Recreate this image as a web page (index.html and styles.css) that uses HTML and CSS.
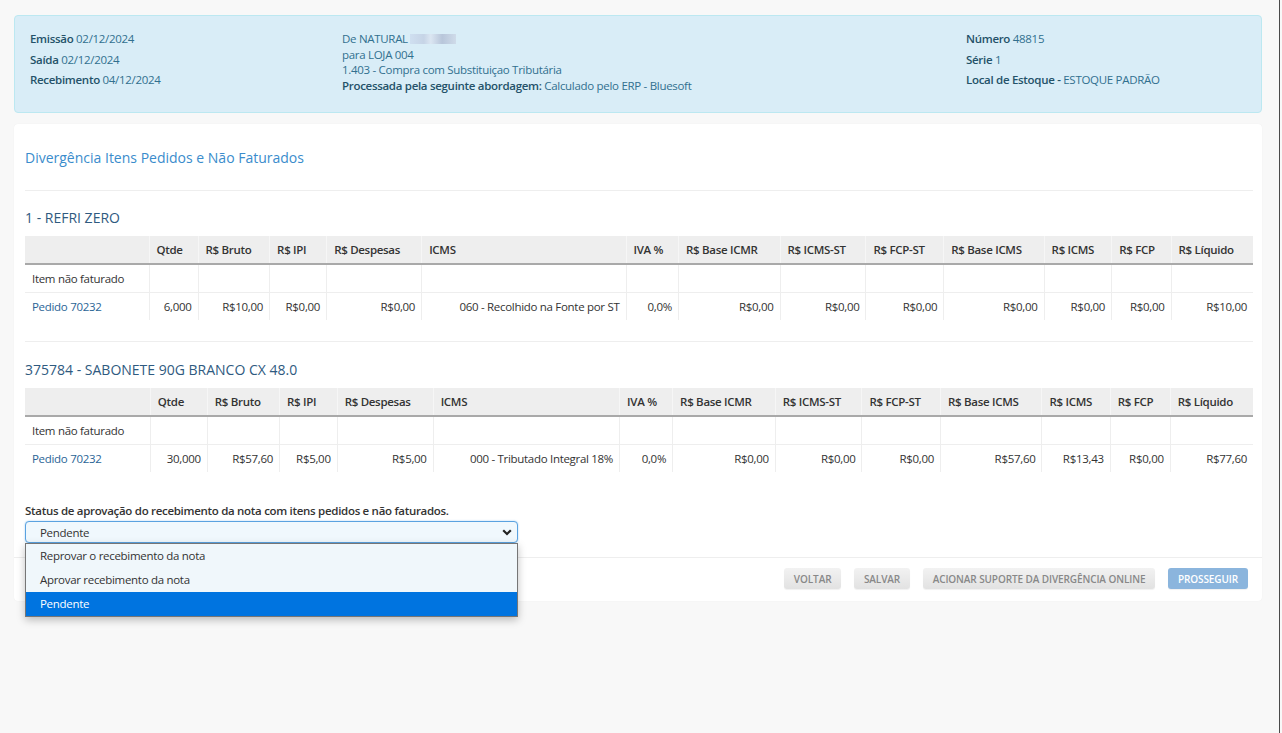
FILE: index.html
```html
<!DOCTYPE html>
<html lang="pt-BR">
<head>
    <meta charset="UTF-8">
    <title>Divergência Itens Pedidos e Não Faturados</title>
    <link rel="stylesheet" href="styles.css">
</head>
<body>
    <div class="page">
        <div class="info-panel">
            <div class="info-col info-left">
                <div class="info-line"><b>Emissão</b> 02/12/2024</div>
                <div class="info-line"><b>Saída</b> 02/12/2024</div>
                <div class="info-line"><b>Recebimento</b> 04/12/2024</div>
            </div>
            <div class="info-col info-mid">
                <div class="mid-line">De NATURAL<span class="blur"></span></div>
                <div class="mid-line">para LOJA 004</div>
                <div class="mid-line">1.403 - Compra com Substituiçao Tributária</div>
                <div class="mid-line"><b>Processada pela seguinte abordagem:</b> Calculado pelo ERP - Bluesoft</div>
            </div>
            <div class="info-col info-right">
                <div class="info-line"><b>Número</b> 48815</div>
                <div class="info-line"><b>Série</b> 1</div>
                <div class="info-line"><b>Local de Estoque -</b> ESTOQUE PADRÃO</div>
            </div>
        </div>

        <div class="card">
            <div class="card-body">
                <h3 class="card-title">Divergência Itens Pedidos e Não Faturados</h3>
                <hr class="divider">

                <h4 class="item-title">1 - REFRI ZERO</h4>
                <table class="items">
                    <thead>
                        <tr>
                            <th></th>
                            <th>Qtde</th>
                            <th>R$ Bruto</th>
                            <th>R$ IPI</th>
                            <th>R$ Despesas</th>
                            <th>ICMS</th>
                            <th>IVA %</th>
                            <th>R$ Base ICMR</th>
                            <th>R$ ICMS-ST</th>
                            <th>R$ FCP-ST</th>
                            <th>R$ Base ICMS</th>
                            <th>R$ ICMS</th>
                            <th>R$ FCP</th>
                            <th>R$ Líquido</th>
                        </tr>
                    </thead>
                    <tbody>
                        <tr>
                            <td>Item não faturado</td>
                            <td></td><td></td><td></td><td></td><td></td><td></td>
                            <td></td><td></td><td></td><td></td><td></td><td></td><td></td>
                        </tr>
                        <tr>
                            <td><a href="#">Pedido 70232</a></td>
                            <td class="num">6,000</td>
                            <td class="num">R$10,00</td>
                            <td class="num">R$0,00</td>
                            <td class="num">R$0,00</td>
                            <td class="num">060 - Recolhido na Fonte por ST</td>
                            <td class="num">0,0%</td>
                            <td class="num">R$0,00</td>
                            <td class="num">R$0,00</td>
                            <td class="num">R$0,00</td>
                            <td class="num">R$0,00</td>
                            <td class="num">R$0,00</td>
                            <td class="num">R$0,00</td>
                            <td class="num">R$10,00</td>
                        </tr>
                    </tbody>
                </table>

                <hr class="divider divider-item">

                <h4 class="item-title">375784 - SABONETE 90G BRANCO CX 48.0</h4>
                <table class="items">
                    <thead>
                        <tr>
                            <th></th>
                            <th>Qtde</th>
                            <th>R$ Bruto</th>
                            <th>R$ IPI</th>
                            <th>R$ Despesas</th>
                            <th>ICMS</th>
                            <th>IVA %</th>
                            <th>R$ Base ICMR</th>
                            <th>R$ ICMS-ST</th>
                            <th>R$ FCP-ST</th>
                            <th>R$ Base ICMS</th>
                            <th>R$ ICMS</th>
                            <th>R$ FCP</th>
                            <th>R$ Líquido</th>
                        </tr>
                    </thead>
                    <tbody>
                        <tr>
                            <td>Item não faturado</td>
                            <td></td><td></td><td></td><td></td><td></td><td></td>
                            <td></td><td></td><td></td><td></td><td></td><td></td><td></td>
                        </tr>
                        <tr>
                            <td><a href="#">Pedido 70232</a></td>
                            <td class="num">30,000</td>
                            <td class="num">R$57,60</td>
                            <td class="num">R$5,00</td>
                            <td class="num">R$5,00</td>
                            <td class="num">000 - Tributado Integral 18%</td>
                            <td class="num">0,0%</td>
                            <td class="num">R$0,00</td>
                            <td class="num">R$0,00</td>
                            <td class="num">R$0,00</td>
                            <td class="num">R$57,60</td>
                            <td class="num">R$13,43</td>
                            <td class="num">R$0,00</td>
                            <td class="num">R$77,60</td>
                        </tr>
                    </tbody>
                </table>

                <div class="status-group">
                    <label class="status-label" for="status">Status de aprovação do recebimento da nota com itens pedidos e não faturados.</label>
                    <div class="select-wrap">
                        <select id="status" class="status-select">
                            <option>Reprovar o recebimento da nota</option>
                            <option>Aprovar recebimento da nota</option>
                            <option selected>Pendente</option>
                        </select>
                        <svg class="chevron" width="10" height="7" viewBox="0 0 10 7">
                            <polyline points="1.2,1.2 5,5 8.8,1.2" fill="none" stroke="#222" stroke-width="2.2"/>
                        </svg>
                        <ul class="select-menu">
                            <li>Reprovar o recebimento da nota</li>
                            <li>Aprovar recebimento da nota</li>
                            <li class="active">Pendente</li>
                        </ul>
                    </div>
                </div>
            </div>

            <div class="card-footer">
                <button class="btn">Voltar</button>
                <button class="btn">Salvar</button>
                <button class="btn">Acionar suporte da divergência online</button>
                <button class="btn btn-primary" disabled>Prosseguir</button>
            </div>
        </div>
    </div>
    <div class="frame-edge"></div>
</body>
</html>
```

FILE: styles.css
```css
* {
    box-sizing: border-box;
}

html, body {
    min-height: 100%;
}

body {
    margin: 0;
    min-height: 733px;
    background: #f8f8f8;
    font-family: "Open Sans", "DejaVu Sans", sans-serif;
    font-size: 11.5px;
    letter-spacing: -0.3px;
    color: #333;
}

.page {
    width: 1248px;
    margin-left: 14px;
    padding-top: 15px;
}

/* header info */
.info-panel {
    display: grid;
    grid-template-columns: 312px 624px 1fr;
    background: #d9edf7;
    border: 1px solid #bce8f1;
    border-radius: 4px;
    padding: 15px 15px 19px 15px;
    color: #31708f;
}

.info-panel b {
    font-weight: 600;
    color: #245269;
}

.info-line {
    line-height: 16px;
    margin-bottom: 4.5px;
}

.mid-line {
    line-height: 15.5px;
}

.blur {
    display: inline-block;
    width: 46px;
    height: 10px;
    margin-left: 2px;
    vertical-align: -1px;
    background: linear-gradient(90deg, #cfdff0 0%, #c6d4e6 30%, #dbe6f2 45%, #b8c6da 70%, #cfdbe9 100%);
}

/* card */
.card {
    margin-top: 11px;
    background: #fff;
    border-radius: 4px;
    box-shadow: 0 0 1px rgba(0, 0, 0, 0.08);
}

.card-body {
    padding: 1px 9px 14px 11px;
}

.card-title {
    margin: 23px 0 0 0;
    font-size: 14px;
    letter-spacing: 0;
    font-weight: 400;
    line-height: 20px;
    color: #3a8ccc;
}

.divider {
    border: 0;
    border-top: 1px solid #eee;
    margin: 22px 0 0 0;
}

.divider-item {
    margin-top: 21px;
}

.item-title {
    margin: 17px 0 8px 0;
    font-size: 14px;
    letter-spacing: 0;
    font-weight: 400;
    line-height: 20px;
    color: #2f5a80;
}

.divider-item + .item-title {
    margin-top: 18px;
}

/* tables */
.items {
    width: 100%;
    border-collapse: collapse;
}

.items th {
    background: #eee;
    border-bottom: 2px solid #a9a9a9;
    font-weight: 600;
    text-align: left;
    height: 28px;
    padding: 0 7px;
    white-space: nowrap;
}

.items td {
    height: 28px;
    padding: 0 6px 0 7px;
    border-top: 1px solid #eee;
    white-space: nowrap;
}

.items th + th {
    border-left: 1px solid #f6f6f6;
}

.items td + td {
    border-left: 1px solid #eee;
}

.items tbody tr:first-child td {
    border-top: 0;
}

.items .num {
    text-align: right;
}

.items a {
    color: #2a6496;
    text-decoration: none;
}

/* status select */
.status-group {
    margin-top: 30px;
}

.status-label {
    display: block;
    font-weight: 600;
    line-height: 17px;
    margin-bottom: 2px;
}

.select-wrap {
    position: relative;
    width: 493px;
}

.status-select {
    display: block;
    width: 100%;
    height: 22px;
    padding: 0 14px;
    font-family: inherit;
    font-size: 11.5px;
    letter-spacing: -0.3px;
    color: #333;
    background: #f0f8fd;
    border: 1px solid #5aa2e0;
    border-radius: 4px;
    box-shadow: 0 0 2px rgba(102, 175, 233, 0.6);
    appearance: none;
    -webkit-appearance: none;
}

.chevron {
    position: absolute;
    right: 6px;
    top: 8px;
}

.select-menu {
    position: absolute;
    top: 22px;
    left: 0;
    width: 100%;
    margin: 0;
    padding: 0;
    list-style: none;
    background: #f0f7fb;
    border: 1px solid #767676;
    box-shadow: 0 3px 8px rgba(0, 0, 0, 0.25);
    z-index: 5;
}

.select-menu li {
    height: 24px;
    line-height: 24px;
    padding-left: 14px;
    color: #333;
}

.select-menu li.active {
    background: #0074e0;
    color: #fff;
}

/* footer */
.card-footer {
    display: flex;
    justify-content: flex-end;
    gap: 12.5px;
    padding: 10px 14px 12px 0;
    border-top: 1px solid #eee;
}

.btn {
    height: 21px;
    padding: 0 10px;
    font-family: inherit;
    font-size: 10px;
    letter-spacing: -0.1px;
    font-weight: 600;
    text-transform: uppercase;
    color: #888;
    background: linear-gradient(#f2f2f2, #e2e2e2);
    border: 0;
    border-radius: 3px;
    box-shadow: 0 1px 1px rgba(0, 0, 0, 0.06);
}

.btn-primary {
    background: #8bb5dd;
    color: #fff;
}

.frame-edge {
    position: fixed;
    top: 0;
    bottom: 0;
    left: 1279px;
    width: 1px;
    background: #4a4a4a;
}
```
